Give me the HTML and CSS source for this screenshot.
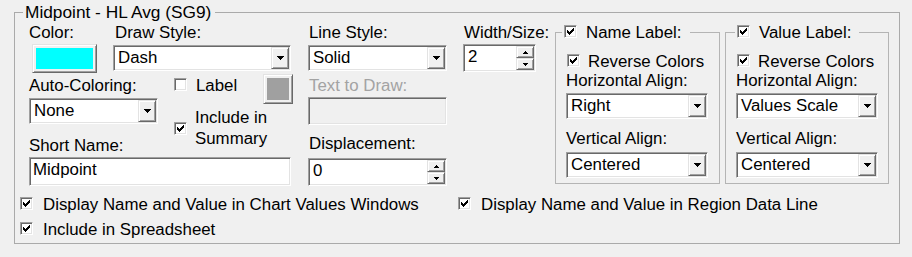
FILE: index.html
```html
<!DOCTYPE html>
<html lang="en">

<head>
  <meta charset="UTF-8">
  <title>Indicator Settings</title>
  <link rel="stylesheet" href="styles.css">
</head>

<body>
  <svg class="defs" width="0" height="0">
    <symbol id="tick" viewBox="0 0 7 7">
      <path d="M6 0h1v1h-1zM5 1h2v1h-2zM0 2h1v1h-1zM4 2h3v1h-3zM0 3h2v1h-2zM3 3h3v1h-3zM0 4h5v1h-5zM1 5h3v1h-3zM2 6h1v1h-1z" />
    </symbol>
    <symbol id="down" viewBox="0 0 7 4">
      <path d="M0 0h7v1h-1v1h-1v1h-1v1h-1v-1h-1v-1h-1v-1h-1z" />
    </symbol>
    <symbol id="sup" viewBox="0 0 5 3">
      <path d="M2 0h1v1h1v1h1v1h-5v-1h1v-1h1z" />
    </symbol>
    <symbol id="sdown" viewBox="0 0 5 3">
      <path d="M0 0h5v1h-1v1h-1v1h-1v-1h-1v-1h-1z" />
    </symbol>
  </svg>

  <fieldset class="group main">
    <legend>Midpoint - HL Avg (SG9)</legend>
    <div class="top">
      <div class="basic">
        <span class="lbl color-lbl">Color:</span>
        <span class="lbl draw-lbl">Draw Style:</span>
        <span class="swatch color-btn"><span class="fill cyan"></span></span>
        <div class="combo draw-combo"><span class="val">Dash</span><span class="drop"><svg width="7" height="4"><use href="#down" /></svg></span></div>
        <span class="lbl auto-lbl">Auto-Coloring:</span>
        <div class="combo auto-combo"><span class="val">None</span><span class="drop"><svg width="7" height="4"><use href="#down" /></svg></span></div>
        <div class="checks">
          <div class="check label-check"><span class="box"></span><span>Label</span></div>
          <div class="check summary-check"><span class="box"><svg width="7" height="7"><use href="#tick" /></svg></span><span>Include in<br>Summary</span></div>
        </div>
        <span class="swatch label-btn"><span class="fill gray"></span></span>
        <span class="lbl short-lbl">Short Name:</span>
        <div class="field short-field">Midpoint</div>
      </div>

      <div class="col line-col">
        <span class="lbl">Line Style:</span>
        <div class="combo line-combo"><span class="val">Solid</span><span class="drop"><svg width="7" height="4"><use href="#down" /></svg></span></div>
        <span class="lbl off">Text to Draw:</span>
        <div class="field disabled text-field"></div>
        <span class="lbl disp-lbl">Displacement:</span>
        <div class="spin disp-spin"><span class="val">0</span>
          <span class="arrows"><span class="sb"><svg width="5" height="3"><use href="#sup" /></svg></span><span class="sb"><svg width="5" height="3"><use href="#sdown" /></svg></span></span>
        </div>
      </div>

      <div class="col width-col">
        <span class="lbl">Width/Size:</span>
        <div class="spin size-spin"><span class="val">2</span>
          <span class="arrows"><span class="sb"><svg width="5" height="3"><use href="#sup" /></svg></span><span class="sb"><svg width="5" height="3"><use href="#sdown" /></svg></span></span>
        </div>
      </div>

      <fieldset class="group sub name-box">
        <legend><span class="check"><span class="box"><svg width="7" height="7"><use href="#tick" /></svg></span><span>Name Label:</span></span></legend>
        <div class="inner">
          <div class="check reverse"><span class="box"><svg width="7" height="7"><use href="#tick" /></svg></span><span>Reverse Colors</span></div>
          <span class="lbl">Horizontal Align:</span>
          <div class="combo"><span class="val">Right</span><span class="drop"><svg width="7" height="4"><use href="#down" /></svg></span></div>
          <span class="lbl valign">Vertical Align:</span>
          <div class="combo"><span class="val">Centered</span><span class="drop"><svg width="7" height="4"><use href="#down" /></svg></span></div>
        </div>
      </fieldset>

      <fieldset class="group sub value-box">
        <legend><span class="check"><span class="box"><svg width="7" height="7"><use href="#tick" /></svg></span><span>Value Label:</span></span></legend>
        <div class="inner">
          <div class="check reverse"><span class="box"><svg width="7" height="7"><use href="#tick" /></svg></span><span>Reverse Colors</span></div>
          <span class="lbl">Horizontal Align:</span>
          <div class="combo"><span class="val">Values Scale</span><span class="drop"><svg width="7" height="4"><use href="#down" /></svg></span></div>
          <span class="lbl valign">Vertical Align:</span>
          <div class="combo"><span class="val">Centered</span><span class="drop"><svg width="7" height="4"><use href="#down" /></svg></span></div>
        </div>
      </fieldset>
    </div>

    <div class="bottom">
      <div class="brow">
        <div class="check"><span class="box"><svg width="7" height="7"><use href="#tick" /></svg></span><span>Display Name and Value in Chart Values Windows</span></div>
        <div class="check"><span class="box"><svg width="7" height="7"><use href="#tick" /></svg></span><span>Display Name and Value in Region Data Line</span></div>
      </div>
      <div class="brow second">
        <div class="check"><span class="box"><svg width="7" height="7"><use href="#tick" /></svg></span><span>Include in Spreadsheet</span></div>
      </div>
    </div>
  </fieldset>
</body>

</html>
```

FILE: styles.css
```css
body {
  margin: 3px 0 0 14px;
  background: #f0f0f0;
  font-family: "Liberation Sans", Arial, sans-serif;
  font-size: 16.85px;
  color: #000;
}

.defs {
  position: absolute;
}

svg {
  display: block;
  fill: #000;
  shape-rendering: crispEdges;
}

.group {
  box-sizing: border-box;
  margin: 0;
  padding: 0;
  min-width: 0;
  border: 1px solid #aaa;
}

.group > legend {
  margin-left: 8px;
  padding: 0 4px 0 2px;
  line-height: 19px;
}

.main {
  width: 886px;
  padding-bottom: 4px;
}

.main > legend {
  font-size: 17.3px;
}

.lbl {
  line-height: 19px;
  white-space: nowrap;
}

.off {
  color: #a3a3a3;
}

/* 3d borders */
.combo,
.field,
.spin,
.box {
  box-sizing: border-box;
  background: #fff;
  border: 1px solid;
  border-color: #a0a0a0 #fff #fff #a0a0a0;
  box-shadow: inset 1px 1px #696969, inset -1px -1px #e3e3e3;
}

.drop,
.sb,
.swatch {
  box-sizing: border-box;
  background: #f0f0f0;
  border: 1px solid;
  border-color: #e3e3e3 #696969 #696969 #e3e3e3;
  box-shadow: inset 1px 1px #fff, inset -1px -1px #a0a0a0;
}

.combo {
  display: flex;
  height: 26px;
  padding: 1px;
}

.combo .val {
  flex: 1;
  padding-left: 3px;
  line-height: 22px;
  white-space: nowrap;
}

.drop {
  display: flex;
  align-items: center;
  justify-content: center;
  width: 18px;
}

.field {
  height: 29px;
  padding: 1px 3px;
  line-height: 21px;
}

.field.disabled {
  background: #f0f0f0;
}

.spin {
  display: flex;
  height: 28px;
  padding: 1px;
}

.spin .val {
  flex: 1;
  padding-left: 3px;
  line-height: 21px;
}

.arrows {
  display: flex;
  flex-direction: column;
  width: 18px;
}

.sb {
  flex: 1;
  display: flex;
  align-items: center;
  justify-content: center;
}

.swatch {
  display: block;
  padding: 3px;
}

.fill {
  display: block;
  height: 100%;
}

.cyan {
  background: #00ffff;
}

.gray {
  background: #a0a0a0;
}

.check {
  display: flex;
  align-items: flex-start;
  line-height: 19px;
  white-space: nowrap;
}

.box {
  flex: none;
  display: flex;
  align-items: center;
  justify-content: center;
  width: 13px;
  height: 13px;
  margin: 2px 9px 0 0;
}

/* top area */
.top {
  display: flex;
  height: 164px;
}

.basic {
  display: grid;
  grid-template-columns: 85px 61px 89px 30px;
  grid-template-rows: 20px 31px 22px 29px 31px 31px;
  width: 265px;
  margin-left: 13px;
}

.basic > * {
  align-self: start;
  justify-self: start;
}

.color-lbl {
  grid-area: 1 / 1;
  margin-top: 1px;
  padding-left: 1px;
}

.draw-lbl {
  grid-area: 1 / 2 / 2 / 5;
  margin-top: 1px;
  padding-left: 2px;
}

.color-btn {
  grid-area: 2 / 1;
  width: 65px;
  height: 29px;
  margin: 2px 0 0 4px;
}

.draw-combo {
  grid-area: 2 / 2 / 3 / 5;
  width: 178px;
  margin-top: 3px;
}

.auto-lbl {
  grid-area: 3 / 1 / 4 / 3;
  margin-top: 3px;
  padding-left: 1px;
}

.auto-combo {
  grid-area: 4 / 1 / 5 / 3;
  width: 129px;
  margin: 3px 0 0 1px;
}

.checks {
  grid-area: 3 / 3 / 7 / 4;
}

.label-check {
  margin-top: 3px;
}

.summary-check {
  align-items: center;
  margin-top: 12px;
  line-height: 21px;
}

.summary-check .box {
  margin-top: 0;
  margin-right: 8px;
}

.label-btn {
  grid-area: 3 / 4 / 5 / 5;
  width: 30px;
  height: 30px;
  margin-top: 1px;
}

.short-lbl {
  grid-area: 5 / 1 / 6 / 5;
  margin-top: 12px;
  padding-left: 1px;
}

.short-field {
  grid-area: 6 / 1 / 7 / 5;
  width: 262px;
  margin: 2px 0 0 1px;
}

.col {
  display: flex;
  flex-direction: column;
  align-items: flex-start;
}

.col > .lbl:first-child {
  margin-top: 1px;
  padding-left: 1px;
}

.line-col {
  width: 139px;
  margin-left: 15px;
}

.line-combo {
  width: 139px;
  margin-top: 3px;
}

.line-col .off {
  margin-top: 5px;
  padding-left: 1px;
}

.text-field {
  width: 139px;
  height: 28px;
  margin-top: 2px;
}

.disp-lbl {
  margin-top: 9px;
  padding-left: 1px;
}

.disp-spin {
  width: 139px;
  margin-top: 5px;
}

.width-col {
  width: 73px;
  margin-left: 16px;
}

.size-spin {
  width: 73px;
  margin-top: 2px;
}

/* name / value label boxes */
.sub {
  height: 161px;
  margin-top: 1px;
  border-color: #b4b4b4;
}

.sub > legend {
  margin-left: 6px;
  padding: 0 8px 0 2px;
}

.name-box {
  width: 165px;
  margin-left: 19px;
}

.value-box {
  width: 164px;
  margin-left: 5px;
}

.value-box > legend {
  margin-left: 9px;
}

.inner {
  display: flex;
  flex-direction: column;
  align-items: flex-start;
  padding: 10px 10px 0 10px;
}

.reverse .box {
  margin-left: 1px;
  margin-right: 8px;
}

.inner .combo {
  width: 142px;
  margin-top: 3px;
}

.inner .valign {
  margin-top: 10px;
}

.inner .valign + .combo {
  margin-top: 4px;
}

/* bottom rows */
.bottom {
  margin-top: 9px;
  padding-left: 5px;
}

.brow {
  display: grid;
  grid-template-columns: 438px auto;
}

.brow .box {
  margin-right: 10px;
}

.brow.second {
  margin-top: 6px;
}
```
